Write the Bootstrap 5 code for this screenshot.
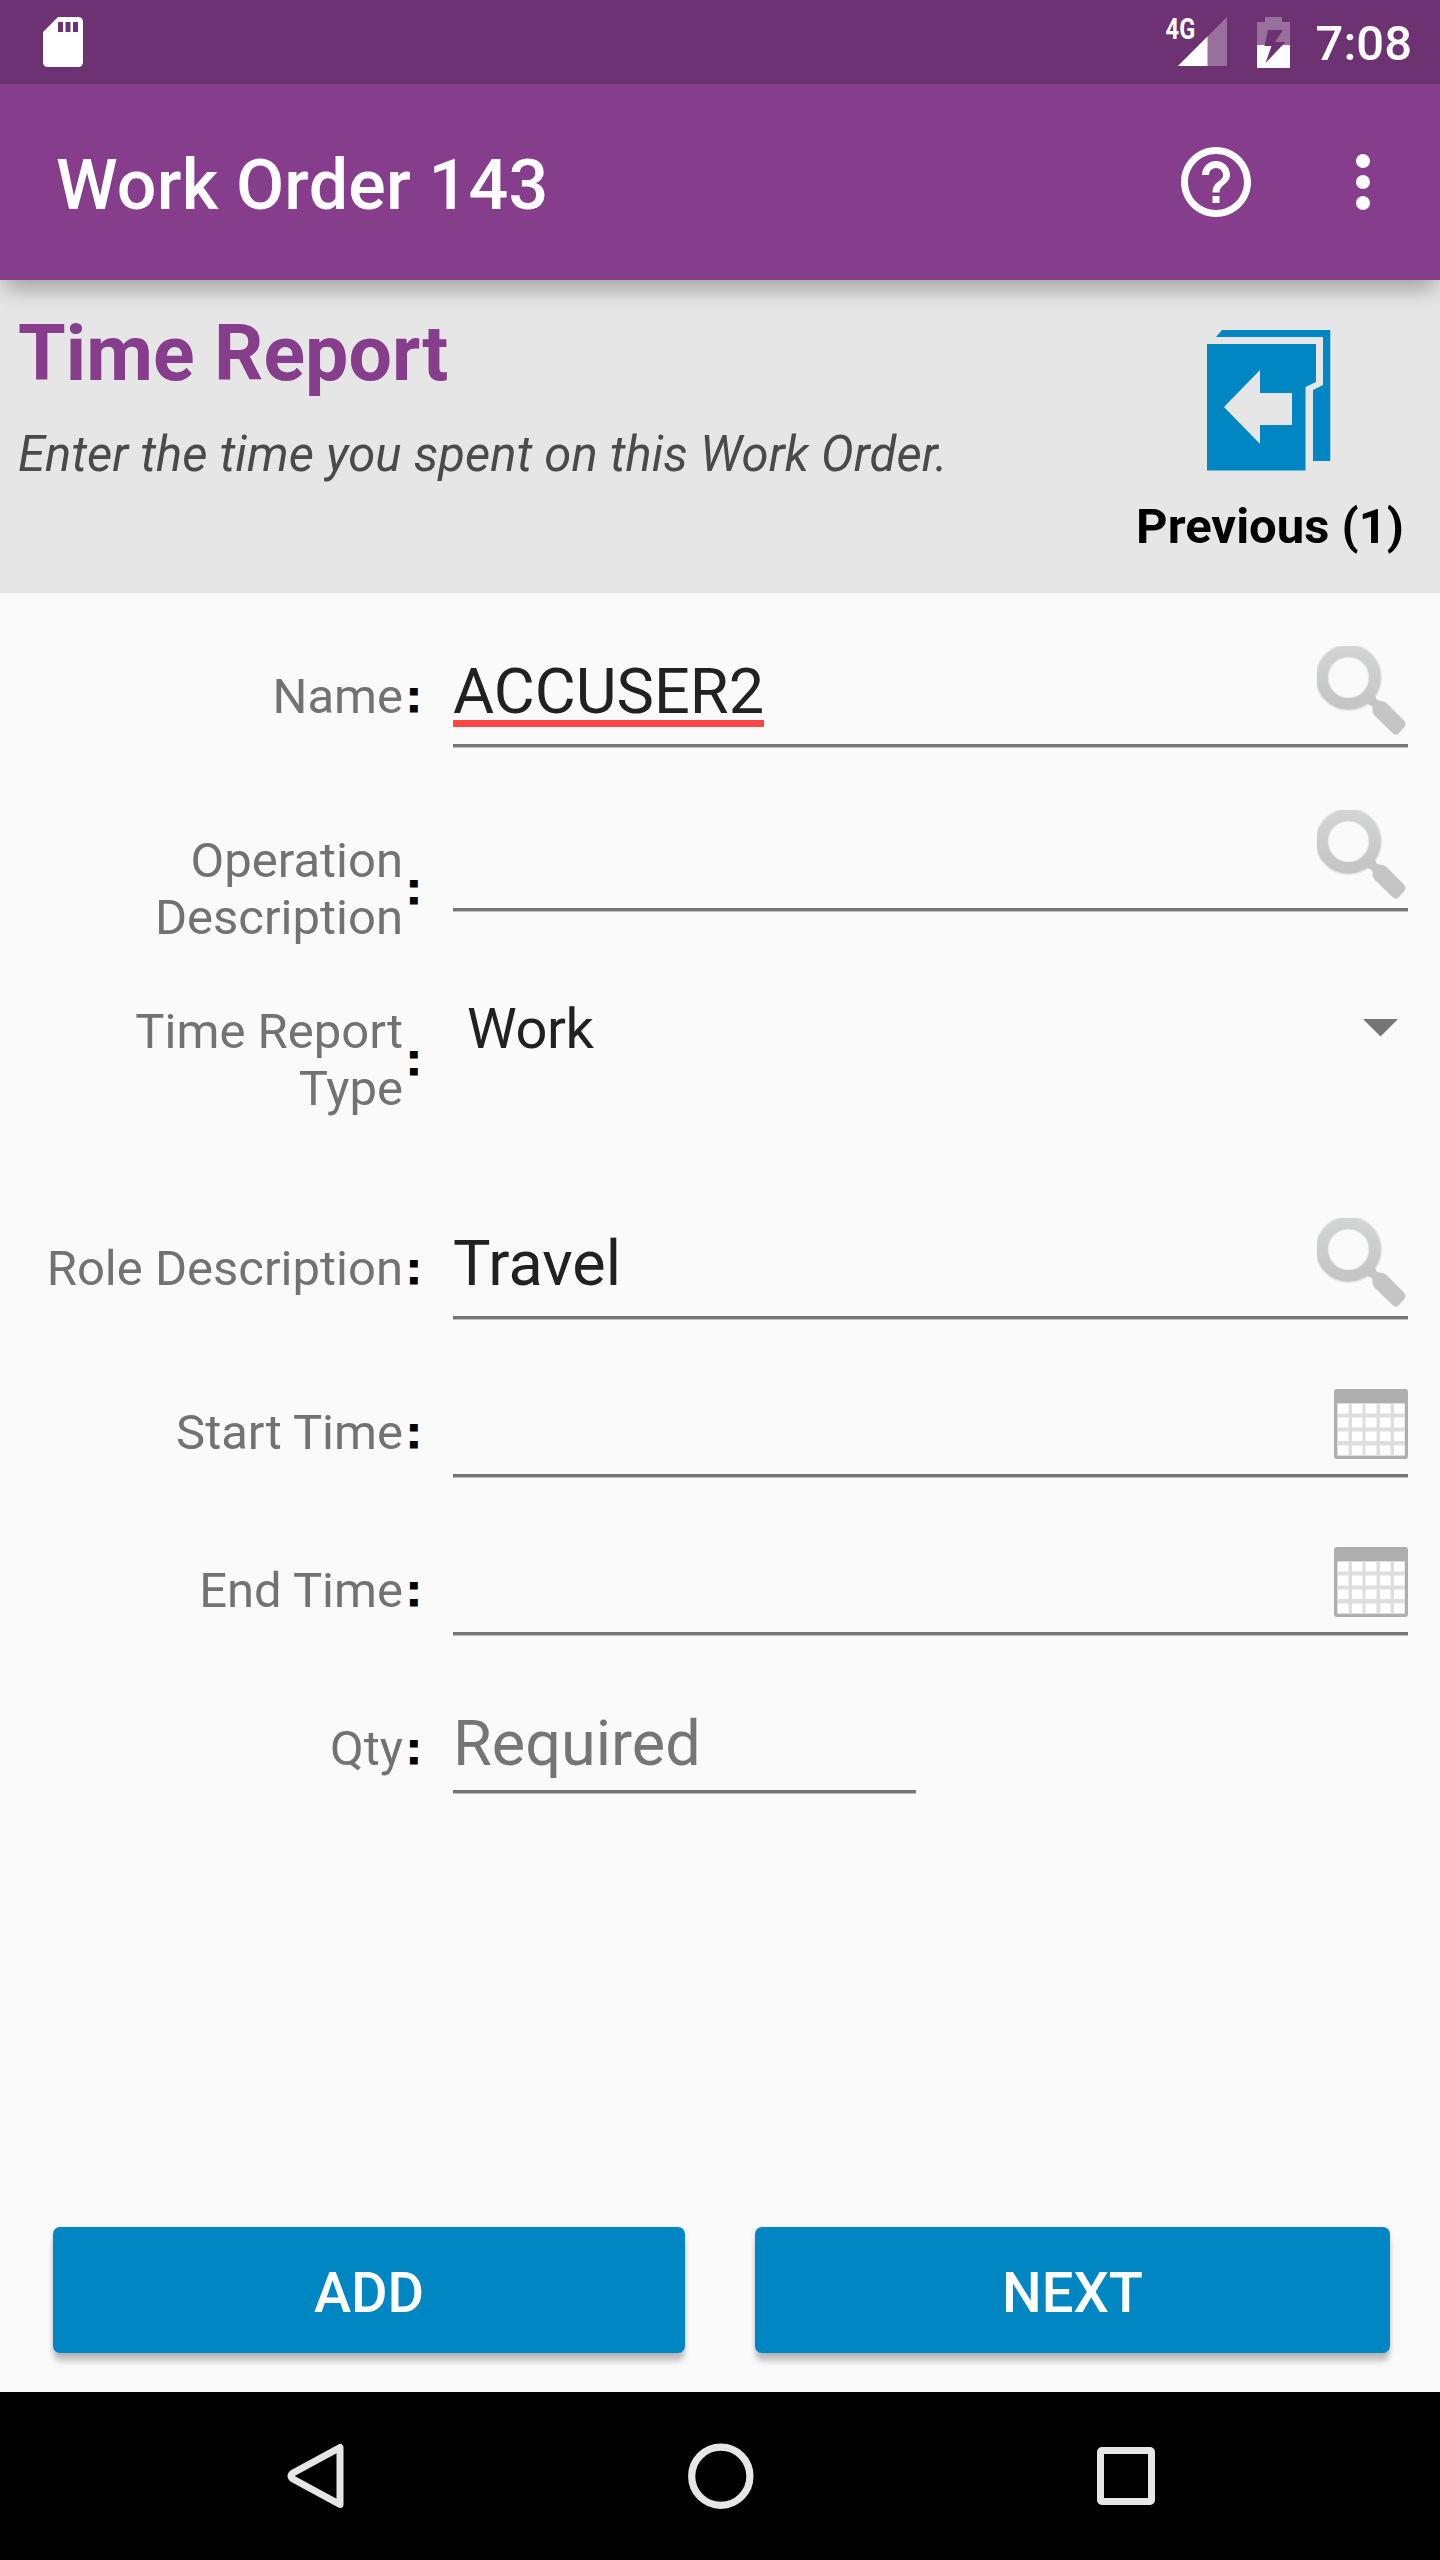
<!DOCTYPE html>
<html lang="en">
<head>
<meta charset="utf-8">
<meta name="viewport" content="width=device-width, initial-scale=1">
<title>Work Order 143</title>
<link href="https://cdn.jsdelivr.net/npm/bootstrap@5.3.0/dist/css/bootstrap.min.css" rel="stylesheet">
<style>
  body { font-family: Roboto, "Liberation Sans", sans-serif; background: #fafafa; color: #212121; width: 1440px; height: 2560px; overflow: hidden; }
  svg { display: block; flex: none; }
  .status-bar { height: 84px; background: #6c3272; padding: 0 28px 0 43px; }
  .clock { font-size: 49px; line-height: 80px; font-weight: 500; color: #fff; margin-left: 26px; padding-top: 4px; }
  .app-bar { height: 196px; background: #863d8b; padding: 0 70px 0 56px; z-index: 2; box-shadow: 0 14px 20px -4px rgba(0,0,0,.28); }
  .app-title { font-size: 70px; line-height: 82px; font-weight: 500; color: #fff; margin-top: 6px; letter-spacing: .2px; }
  .more-dots { margin-left: 98px; }
  .battery { margin-left: 29px; }
  .report-head { height: 313px; background: #e6e6e6; padding: 29px 36px 0 18px; }
  .report-title { font-size: 77px; line-height: 90px; font-weight: 700; color: #863d8b; letter-spacing: .1px; }
  .report-hint { font-size: 49px; line-height: 57px; font-style: italic; color: #4a4a4a; margin-top: 27px; letter-spacing: .06px; }
  .prev-icon { margin: 21px 3px 0 0; }
  .prev-label { font-size: 49px; line-height: 57px; font-weight: 700; color: #000; margin-top: 27px; }
  .form-area { height: 1634px; padding: 53px 32px 0 0; }
  .field-row { padding-left: 28px; height: 164px; }
  .row-operation { height: 171px; }
  .row-type { height: 237px; }
  .row-time { height: 158px; }
  .field-label { width: 375px; padding-top: 22px; font-size: 49px; line-height: 57px; color: #727272; }
  .colon { width: 50px; padding: 21px 0 0 3px; font: 700 47px/57px "Liberation Sans", sans-serif; color: #000; -webkit-text-stroke: 1.2px #000; }
  .colon-mid { padding-top: 49px; }
  .field-box { height: 101px; border-bottom: 3px solid #757575; box-shadow: 0 1px 0 #bdbdbd; font-size: 63px; line-height: 74px; padding-top: 9px; }
  .field-box.low { height: 95px; }
  .field-box svg { margin-top: -9px; }
  .field-box.low svg { margin-top: -2px; }
  .misspelt { height: 72px; border-bottom: 7px solid #ff4444; line-height: 74px; }
  .qty-box { flex: none; width: 463px; color: #757575; }
  .spinner { font-size: 56px; line-height: 66px; padding: 15px 10px 0 14px; letter-spacing: -.4px; }
  .spinner svg { margin-top: 23px; }
  .actions { padding: 0 50px 0 53px; height: 165px; }
  .btn-flat { height: 126px; border: 0; border-radius: 7px; background: #0087c3; color: #fff; font-size: 56px; font-weight: 500; line-height: 66px; padding: 5px 0 0; box-shadow: 0 9px 6px -1px rgba(0,0,0,.23), 0 1px 5px rgba(0,0,0,.12); }
  .btn-add { width: 632px; } .btn-next { width: 635px; }
  .nav-keys { height: 168px; background: #000; padding: 0 285px 0 287px; }
</style>
</head>
<body>
<svg width="0" height="0" class="position-absolute" aria-hidden="true">
  <defs>
    <linearGradient id="lensTone" x1="0" y1="0" x2="0" y2="90" gradientUnits="userSpaceOnUse">
      <stop offset="0" stop-color="#d3d5d5"/><stop offset=".6" stop-color="#c6c6c6"/><stop offset="1" stop-color="#c4c4c4"/>
    </linearGradient>
    <symbol id="lens" viewBox="0 0 91 90">
      <circle cx="31.500" cy="31.500" r="26.700" fill="none" stroke="#e6e6e6" stroke-width="14"/>
      <circle cx="31.500" cy="31.500" r="26.500" fill="none" stroke="url(#lensTone)" stroke-width="11.500"/>
      <path d="M48 56 57 47 60 54 67 55.500Q70 57 72 59.500L87 74.500Q90 78 87 81.500L82 87Q79 90 76 87.500L57 69Q55 66 55.500 61Z" fill="url(#lensTone)"/>
    </symbol>
    <symbol id="calendar" viewBox="0 0 74 70">
      <rect x="0" y="0" width="74" height="70" rx="3" fill="#aeaeae"/>
      <rect x="3" y="14" width="68" height="53" rx="1" fill="#dededf"/>
      <path fill="#fff" d="M4 15h10.500v9.500H4zM18 15h10.500v9.500H18zM31.500 15h11v9.500h-11zM46 15h10.500v9.500H46zM60 15h10.500v9.500H60zM4 28.500h10.500v10H4zM18 28.500h10.500v10H18zM31.500 28.500h11v10h-11zM46 28.500h10.500v10H46zM60 28.500h10.500v10H60zM4 42.500h10.500v9.500H4zM18 42.500h10.500v9.500H18zM31.500 42.500h11v9.500h-11zM46 42.500h10.500v9.500H46zM60 42.500h10.500v9.500H60zM4 56.500h10.500v9.500H4zM18 56.500h10.500v9.500H18zM31.500 56.500h11v9.500h-11zM46 56.500h10.500v9.500H46zM60 56.500h10.500v9.500H60z"/>
    </symbol>
  </defs>
</svg>

<header>
  <div class="status-bar d-flex align-items-center">
    <svg width="40" height="50" viewBox="0 0 40 50" class="me-auto"><path fill="#fff" fill-rule="evenodd" d="M15 0H35Q40 0 40 5V45Q40 50 35 50H5Q0 50 0 45V15ZM15 5V15H20V5ZM22.500 5V15H27.500V5ZM30 5V15H35V5Z"/></svg>
    <svg width="66" height="72" viewBox="-4 -10 66 72">
      <path fill="#996f9c" d="M61 1V50H12Z"/><path fill="#fff" d="M41.500 20.500V50H12Z"/>
      <text x="-.5" y="23" transform="scale(.8 1)" font-size="29.500" font-weight="700" fill="#fff">4G</text>
    </svg>
    <svg width="33" height="51" viewBox="0 0 33 51" class="battery">
      <path fill="#996f9c" d="M8 0H25V5H33V28H0V5H8Z"/><path fill="#fff" d="M0 28H33V51H0Z"/>
      <path fill="#6c3272" d="M11 13H26L18 25H28.500L8.500 46 14.500 29H7.500Z"/>
    </svg>
    <span class="clock">7:08</span>
  </div>
  <div class="app-bar d-flex align-items-center position-relative">
    <h1 class="app-title mb-0 me-auto">Work Order 143</h1>
    <svg width="84" height="84" viewBox="0 0 24 24" fill="#fff"><path d="M11 18h2v-2h-2v2zm1-16C6.480 2 2 6.480 2 12s4.480 10 10 10 10-4.480 10-10S17.520 2 12 2zm0 18c-4.410 0-8-3.590-8-8s3.590-8 8-8 8 3.590 8 8-3.590 8-8 8zm0-14c-2.210 0-4 1.790-4 4h2c0-1.100.9-2 2-2s2 .9 2 2c0 2-3 1.750-3 5h2c0-2.250 3-2.500 3-5 0-2.210-1.790-4-4-4z"/></svg>
    <svg width="14" height="56" viewBox="0 0 14 56" fill="#fff" class="more-dots"><circle cx="7" cy="7" r="7"/><circle cx="7" cy="28" r="7"/><circle cx="7" cy="49" r="7"/></svg>
  </div>
</header>

<main>
  <section class="report-head d-flex justify-content-between">
    <div>
      <h2 class="report-title mb-0">Time Report</h2>
      <p class="report-hint mb-0">Enter the time you spent on this Work Order.</p>
    </div>
    <div class="d-flex flex-column align-items-center">
      <svg width="124" height="141" viewBox="0 0 124 141" fill="#0087c3" class="prev-icon">
        <path d="M15 0H123.300V131H106V60L116 55V7H9Z"/>
        <path fill-rule="evenodd" d="M0 14H109V52L98.500 57V140.500H0ZM17 77 53 114V95H85V63H53V40Z"/>
      </svg>
      <span class="prev-label">Previous (1)</span>
    </div>
  </section>

  <form class="form-area">
    <div class="field-row d-flex">
      <label class="field-label text-end">Name</label><span class="colon">:</span>
      <div class="field-box flex-grow-1 d-flex justify-content-between"><span class="misspelt">ACCUSER2</span><svg width="91" height="90"><use href="#lens"/></svg></div>
    </div>
    <div class="field-row row-operation d-flex">
      <label class="field-label text-end">Operation<br>Description</label><span class="colon colon-mid">:</span>
      <div class="field-box flex-grow-1 d-flex justify-content-end"><svg width="91" height="90"><use href="#lens"/></svg></div>
    </div>
    <div class="field-row row-type d-flex">
      <label class="field-label text-end">Time Report<br>Type</label><span class="colon colon-mid">:</span>
      <div class="spinner flex-grow-1 d-flex justify-content-between"><span>Work</span><svg width="35" height="18" viewBox="0 0 35 18"><path fill="#757575" d="M0 0H35L17.500 17.500Z"/></svg></div>
    </div>
    <div class="field-row d-flex">
      <label class="field-label text-end">Role Description</label><span class="colon">:</span>
      <div class="field-box flex-grow-1 d-flex justify-content-between"><span>Travel</span><svg width="91" height="90"><use href="#lens"/></svg></div>
    </div>
    <div class="field-row row-time d-flex">
      <label class="field-label text-end">Start Time</label><span class="colon">:</span>
      <div class="field-box low flex-grow-1 d-flex justify-content-end"><svg width="74" height="70"><use href="#calendar"/></svg></div>
    </div>
    <div class="field-row row-time d-flex">
      <label class="field-label text-end">End Time</label><span class="colon">:</span>
      <div class="field-box low flex-grow-1 d-flex justify-content-end"><svg width="74" height="70"><use href="#calendar"/></svg></div>
    </div>
    <div class="field-row d-flex">
      <label class="field-label text-end">Qty</label><span class="colon">:</span>
      <div class="field-box low qty-box">Required</div>
    </div>
  </form>

  <div class="actions d-flex justify-content-between align-items-start">
    <button type="button" class="btn btn-flat btn-add">ADD</button>
    <button type="button" class="btn btn-flat btn-next">NEXT</button>
  </div>
</main>

<nav class="nav-keys d-flex justify-content-between align-items-center">
  <svg width="58" height="66" viewBox="0 0 58 66"><path fill="none" stroke="#e6e6e6" stroke-width="7" stroke-linejoin="round" d="M53 4.500V61.500L6 36Q2 33 6 30Z"/></svg>
  <svg width="66" height="66" viewBox="0 0 66 66"><circle cx="32.800" cy="33.200" r="29.100" fill="none" stroke="#e6e6e6" stroke-width="7.200"/></svg>
  <svg width="58" height="58" viewBox="0 0 58 58"><rect x="3.500" y="3.500" width="51" height="51" rx="1.500" fill="none" stroke="#e6e6e6" stroke-width="7"/></svg>
</nav>
<script src="https://cdn.jsdelivr.net/npm/bootstrap@5.3.0/dist/js/bootstrap.bundle.min.js"></script>
</body>
</html>
